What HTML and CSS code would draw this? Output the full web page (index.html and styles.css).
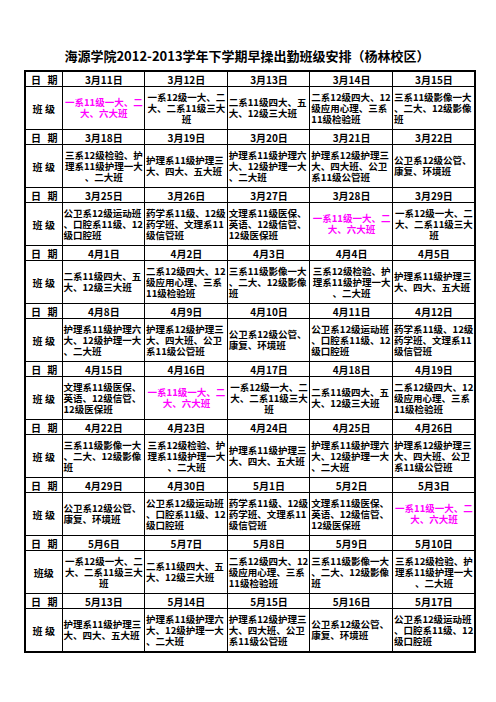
FILE: index.html
```html
<!DOCTYPE html>
<html lang="zh-CN">
<head>
<meta charset="utf-8">
<title>早操出勤班级安排</title>
<link rel="stylesheet" href="styles.css">
</head>
<body>
<div class="page">
<h1 class="title">海源学院2012-2013学年下学期早操出勤班级安排（杨林校区）</h1>
<table class="sched">
<colgroup><col class="c0"><col><col><col><col><col></colgroup>
<tbody>
<tr class="dr"><th class="lab"><span class="sp"><span>日</span><span>期</span></span></th><td>3月11日</td><td>3月12日</td><td>3月13日</td><td>3月14日</td><td>3月15日</td></tr>
<tr class="cr"><th class="lab"><span class="bj">班 级</span></th>
<td class="c pink">一系11级一大、二<br>大、六大班</td>
<td class="c">一系12级一大、二<br>大、二系11级三大<br>班</td>
<td class="l">二系11级四大、五<br>大、12级三大班</td>
<td class="l">二系12级四大、12<br>级应用心理、三系<br>11级检验班</td>
<td class="l">三系11级影像一大<br>、二大、12级影像<br>班</td></tr>

<tr class="dr"><th class="lab"><span class="sp"><span>日</span><span>期</span></span></th><td>3月18日</td><td>3月19日</td><td>3月20日</td><td>3月21日</td><td>3月22日</td></tr>
<tr class="cr"><th class="lab"><span class="bj">班 级</span></th>
<td class="c">三系12级检验、护<br>理系11级护理一大<br>、二大班</td>
<td class="l">护理系11级护理三<br>大、四大、五大班</td>
<td class="l">护理系11级护理六<br>大、12级护理一大<br>、二大班</td>
<td class="l">护理系12级护理三<br>大、四大班、公卫<br>系11级公管班</td>
<td class="l">公卫系12级公管、<br>康复、环境班</td></tr>

<tr class="dr"><th class="lab"><span class="sp"><span>日</span><span>期</span></span></th><td>3月25日</td><td>3月26日</td><td>3月27日</td><td>3月28日</td><td>3月29日</td></tr>
<tr class="cr"><th class="lab"><span class="bj">班 级</span></th>
<td class="l">公卫系12级运动班<br>、口腔系11级、12<br>级口腔班</td>
<td class="l">药学系11级、12级<br>药学班、文理系11<br>级信管班</td>
<td class="l">文理系11级医保、<br>英语、12级信管、<br>12级医保班</td>
<td class="c pink">一系11级一大、二<br>大、六大班</td>
<td class="c">一系12级一大、二<br>大、二系11级三大<br>班</td></tr>

<tr class="dr"><th class="lab"><span class="sp"><span>日</span><span>期</span></span></th><td>4月1日</td><td>4月2日</td><td>4月3日</td><td>4月4日</td><td>4月5日</td></tr>
<tr class="cr"><th class="lab"><span class="bj">班 级</span></th>
<td class="l">二系11级四大、五<br>大、12级三大班</td>
<td class="l">二系12级四大、12<br>级应用心理、三系<br>11级检验班</td>
<td class="l">三系11级影像一大<br>、二大、12级影像<br>班</td>
<td class="c">三系12级检验、护<br>理系11级护理一大<br>、二大班</td>
<td class="l">护理系11级护理三<br>大、四大、五大班</td></tr>

<tr class="dr"><th class="lab"><span class="sp"><span>日</span><span>期</span></span></th><td>4月8日</td><td>4月9日</td><td>4月10日</td><td>4月11日</td><td>4月12日</td></tr>
<tr class="cr"><th class="lab"><span class="bj">班 级</span></th>
<td class="l">护理系11级护理六<br>大、12级护理一大<br>、二大班</td>
<td class="l">护理系12级护理三<br>大、四大班、公卫<br>系11级公管班</td>
<td class="l">公卫系12级公管、<br>康复、环境班</td>
<td class="l">公卫系12级运动班<br>、口腔系11级、12<br>级口腔班</td>
<td class="l">药学系11级、12级<br>药学班、文理系11<br>级信管班</td></tr>

<tr class="dr"><th class="lab"><span class="sp narrow"><span>日</span><span>期</span></span></th><td>4月15日</td><td>4月16日</td><td>4月17日</td><td>4月18日</td><td>4月19日</td></tr>
<tr class="cr"><th class="lab"><span class="bj">班 级</span></th>
<td class="l">文理系11级医保、<br>英语、12级信管、<br>12级医保班</td>
<td class="c pink">一系11级一大、二<br>大、六大班</td>
<td class="c">一系12级一大、二<br>大、二系11级三大<br>班</td>
<td class="l">二系11级四大、五<br>大、12级三大班</td>
<td class="l">二系12级四大、12<br>级应用心理、三系<br>11级检验班</td></tr>

<tr class="dr"><th class="lab"><span class="sp"><span>日</span><span>期</span></span></th><td>4月22日</td><td>4月23日</td><td>4月24日</td><td>4月25日</td><td>4月26日</td></tr>
<tr class="cr"><th class="lab"><span class="bj">班 级</span></th>
<td class="l">三系11级影像一大<br>、二大、12级影像<br>班</td>
<td class="c">三系12级检验、护<br>理系11级护理一大<br>、二大班</td>
<td class="l">护理系11级护理三<br>大、四大、五大班</td>
<td class="l">护理系11级护理六<br>大、12级护理一大<br>、二大班</td>
<td class="l">护理系12级护理三<br>大、四大班、公卫<br>系11级公管班</td></tr>

<tr class="dr"><th class="lab"><span class="sp"><span>日</span><span>期</span></span></th><td>4月29日</td><td>4月30日</td><td>5月1日</td><td>5月2日</td><td>5月3日</td></tr>
<tr class="cr"><th class="lab"><span class="bj">班 级</span></th>
<td class="l">公卫系12级公管、<br>康复、环境班</td>
<td class="l">公卫系12级运动班<br>、口腔系11级、12<br>级口腔班</td>
<td class="l">药学系11级、12级<br>药学班、文理系11<br>级信管班</td>
<td class="l">文理系11级医保、<br>英语、12级信管、<br>12级医保班</td>
<td class="c pink">一系11级一大、二<br>大、六大班</td></tr>

<tr class="dr"><th class="lab"><span class="sp"><span>日</span><span>期</span></span></th><td>5月6日</td><td>5月7日</td><td>5月8日</td><td>5月9日</td><td>5月10日</td></tr>
<tr class="cr"><th class="lab"><span class="bj tight">班级</span></th>
<td class="c">一系12级一大、二<br>大、二系11级三大<br>班</td>
<td class="l">二系11级四大、五<br>大、12级三大班</td>
<td class="l">二系12级四大、12<br>级应用心理、三系<br>11级检验班</td>
<td class="l">三系11级影像一大<br>、二大、12级影像<br>班</td>
<td class="c">三系12级检验、护<br>理系11级护理一大<br>、二大班</td></tr>

<tr class="dr"><th class="lab"><span class="sp"><span>日</span><span>期</span></span></th><td>5月13日</td><td>5月14日</td><td>5月15日</td><td>5月16日</td><td>5月17日</td></tr>
<tr class="cr"><th class="lab"><span class="bj">班 级</span></th>
<td class="l">护理系11级护理三<br>大、四大、五大班</td>
<td class="l">护理系11级护理六<br>大、12级护理一大<br>、二大班</td>
<td class="l">护理系12级护理三<br>大、四大班、公卫<br>系11级公管班</td>
<td class="l">公卫系12级公管、<br>康复、环境班</td>
<td class="l">公卫系12级运动班<br>、口腔系11级、12<br>级口腔班</td></tr>
</tbody>
</table>
</div>
</body>
</html>
```
FILE: styles.css
```css
html, body {
  margin: 0;
  padding: 0;
  background: #ffffff;
}
body {
  font-family: "Noto Sans CJK SC", "Noto Sans", sans-serif;
  color: #000000;
}
.page {
  width: 496px;
  padding: 47px 0 0 24px;
  box-sizing: border-box;
}
.title {
  margin: 0 0 0 -3px;
  width: 452px;
  text-align: center;
  font-size: 13px;
  line-height: 17px;
  height: 23px;
  font-weight: 700;
}
.sched {
  border-collapse: collapse;
  table-layout: fixed;
  width: 452px;
  border: 2px solid #000;
}
.c0 { width: 37px; }
.sched th, .sched td {
  border: 1px solid #000;
  padding: 0 0 0 1px;
  font-size: 9.5px;
  line-height: 11px;
  font-weight: 700;
  white-space: nowrap;
  overflow: hidden;
  vertical-align: middle;
}
.dr th, .dr td {
  height: 14px;
  text-align: center;
  font-size: 10px;
}
.cr th, .cr td {
  height: 42px;
}
.sched .lab { padding: 0; font-size: 10px; }
.sp {
  display: flex;
  justify-content: space-between;
  padding: 0 4px 0 5px;
}
.sp.narrow {
  justify-content: center;
  gap: 6px;
}
.bj {
  display: block;
  text-align: center;
}
.c { text-align: center; }
.l { text-align: left; }
.pink { color: #ff00ff; }
```
